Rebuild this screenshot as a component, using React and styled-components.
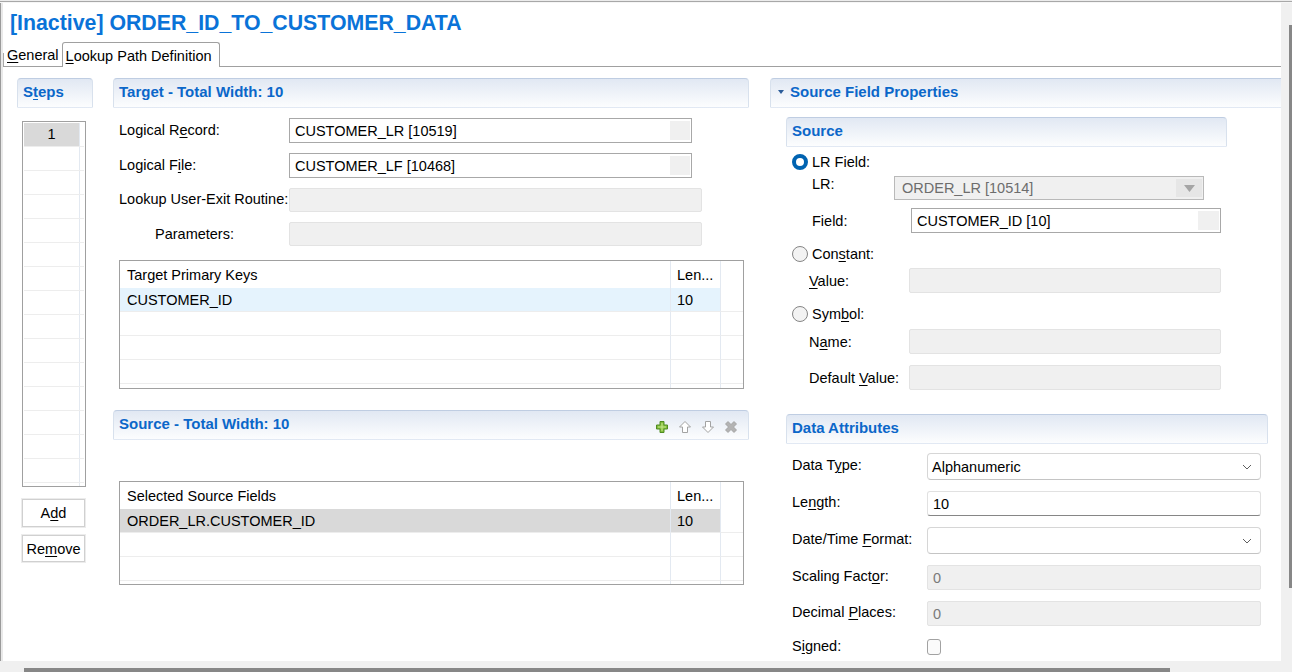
import React from "react";
import styled, { createGlobalStyle, css } from "styled-components";

const GlobalStyle = createGlobalStyle`
  html, body {
    margin: 0;
    padding: 0;
    background: #f0f0f0;
  }
  body {
    font-family: "Liberation Sans", Arial, sans-serif;
    font-size: 14.5px;
    color: #000;
  }
  u {
    text-decoration-thickness: 1px;
    text-underline-offset: 2px;
  }
`;

const Window = styled.div`
  width: 1292px;
  height: 672px;
  overflow: hidden;
  display: grid;
  grid-template-columns: 3px 1278px 11px;
  grid-template-rows: 3px 658px 11px;
  background: #f0f0f0;
`;

const TopStrip = styled.div`
  grid-column: 1 / 4;
  background: linear-gradient(#ececec 0 1px, #a8a8a8 1px 2px, #f6f6f6 2px);
`;

const LeftEdge = styled.div`
  border-left: 1px solid #9a9a9a;
  background: #e9e9e9;
`;

const RightGutter = styled.div`
  display: flex;
  justify-content: flex-end;
  padding-top: 22px;
`;

const VThumb = styled.div`
  width: 3px;
  height: 563px;
  background: #878787;
`;

const BottomBar = styled.div`
  grid-column: 1 / 4;
  padding: 7px 0 0 24px;
`;

const HThumb = styled.div`
  width: 1146px;
  height: 4px;
  background: #878787;
`;

const Content = styled.div`
  background: #fff;
  overflow: hidden;
  display: flex;
  flex-direction: column;
`;

const Title = styled.h1`
  margin: 8px 0 0 7px;
  font-size: 21.3px;
  line-height: 24px;
  font-weight: 700;
  color: #0a73d8;
  white-space: nowrap;
`;

const TabBar = styled.div`
  margin-top: 7px;
  height: 24px;
  display: flex;
  align-items: flex-end;
  border-bottom: 1px solid #a0a0a0;
`;

const Tab = styled.div`
  box-sizing: border-box;
  height: ${(p) => (p.$active ? "25px" : "24px")};
  line-height: 22px;
  padding: 2px ${(p) => (p.$active ? "7px 0 3px" : "3px 0 4px")};
  white-space: nowrap;
  ${(p) =>
    p.$active
      ? css`
          margin-bottom: -1px;
          border: 1px solid #a0a0a0;
          border-bottom: none;
          border-radius: 3px 3px 0 0;
          background: #fff;
        `
      : css`
          background-image: linear-gradient(#a9a9a9, #a9a9a9);
          background-size: 1px 13px;
          background-position: left bottom;
          background-repeat: no-repeat;
        `}
`;

const Body = styled.div`
  display: grid;
  grid-template-columns: 76px 637px 511px;
  column-gap: 20px;
  padding: 11px 0 0 14px;
  align-items: start;
`;

const Column = styled.div`
  display: flex;
  flex-direction: column;
  align-items: flex-start;
`;

const SectionHeader = styled.div`
  box-sizing: border-box;
  width: ${(p) => p.$w}px;
  height: 30px;
  margin-top: ${(p) => p.$mt || 0}px;
  display: flex;
  align-items: flex-start;
  gap: 6px;
  padding: 4px ${(p) => p.$pr || 0}px 0 ${(p) => p.$pl || 5}px;
  border: 1px solid;
  border-color: #bfcde2 #d8e1ed transparent #d8e1ed;
  border-radius: 4px 4px 0 0;
  background: linear-gradient(#e1e8f3, #fcfdfe);
  color: #0b67c9;
  font-size: 15px;
  line-height: 18px;
  font-weight: 700;
  white-space: nowrap;
`;

const HeaderTools = styled.div`
  margin-left: auto;
  align-self: center;
  display: flex;
  gap: 9px;
`;

const Caret = styled.span`
  margin-top: 7px;
  width: 0;
  height: 0;
  border-left: 3.5px solid transparent;
  border-right: 3.5px solid transparent;
  border-top: 4px solid #2b5c99;
`;

/* ---- steps list ---- */

const StepsList = styled.div`
  box-sizing: border-box;
  margin: 13px 0 0 5px;
  width: 64px;
  height: 366px;
  padding: 1px;
  border: 1px solid #a0a0a0;
  overflow: hidden;
`;

const StepRow = styled.div`
  box-sizing: border-box;
  height: 24px;
  display: flex;
  border-bottom: 1px solid #ededed;
`;

const StepCell = styled.div`
  width: 55px;
  text-align: center;
  line-height: 23px;
  border-right: 1px solid #e3e9f1;
  background: ${(p) => (p.$selected ? "#d9d9d9" : "transparent")};
`;

const ButtonStack = styled.div`
  margin: 12px 0 0 5px;
  display: flex;
  flex-direction: column;
  gap: 8px;
`;

const Button = styled.button`
  box-sizing: border-box;
  width: 63px;
  height: ${(p) => p.$h || 28}px;
  padding: 0;
  font: inherit;
  color: #000;
  background: #fff;
  border: 1px solid #d0d0d0;
  outline: 1px solid #ececec;
`;

/* ---- forms ---- */

const Form = styled.div`
  display: grid;
  grid-template-columns: ${(p) => p.$label}px auto;
  grid-template-rows: ${(p) => p.$rows || "auto"};
  row-gap: ${(p) => p.$gap || 11}px;
  align-items: center;
  margin: ${(p) => p.$m || "10px 0 0 6px"};
`;

const Label = styled.span`
  padding-left: ${(p) => p.$indent || 0}px;
  margin-top: ${(p) => p.$lift || 0}px;
  white-space: nowrap;
`;

const Field = styled.div`
  box-sizing: border-box;
  width: ${(p) => p.$w}px;
  height: ${(p) => p.$h || 25}px;
  display: flex;
  align-items: center;
  padding-left: ${(p) => p.$pl || 5}px;
  white-space: nowrap;
  ${(p) => {
    switch (p.$kind) {
      case "disabled":
        return css`
          background: #f0f0f0;
          border: 1px solid #e3e3e3;
          border-radius: 2px;
          color: #7a7a7a;
        `;
      case "combo-off":
        return css`
          background: #f0f0f0;
          border: 1px solid #b9b9b9;
          color: #6d6d6d;
        `;
      case "select":
        return css`
          background: #fff;
          border: 1px solid #d6d6d6;
          border-bottom-color: #c4c4c4;
          border-radius: 4px;
        `;
      case "edit":
        return css`
          background: #fff;
          border: 1px solid #e1e1e1;
          border-bottom: 1px solid #868686;
          border-radius: 3px;
        `;
      default:
        return css`
          background: #fff;
          border: 1px solid #a8a8a8;
        `;
    }
  }}
`;

const Knob = styled.span`
  align-self: stretch;
  width: ${(p) => p.$w || 20}px;
  margin: 2px 1px 2px auto;
  background: ${(p) => p.$bg || "#f0f0f0"};
  display: flex;
  align-items: center;
  justify-content: center;
`;

const Chevron = styled.svg`
  margin: 0 8px 0 auto;
`;

const Check = styled.span`
  box-sizing: border-box;
  width: 14px;
  height: 16px;
  margin-top: 2px;
  border: 1px solid #a2a2a2;
  border-radius: 3px;
  background: #fbfbfb;
`;

/* ---- tables ---- */

const Table = styled.div`
  box-sizing: border-box;
  margin: ${(p) => p.$mt}px 0 0 6px;
  width: 625px;
  height: ${(p) => p.$h}px;
  border: 1px solid #a0a0a0;
  overflow: hidden;
  display: grid;
  grid-template-columns: 551px 50px 1fr;
  grid-template-rows: 27px;
  grid-auto-rows: 24px;
`;

const Cell = styled.div`
  box-sizing: border-box;
  padding-left: ${(p) => (p.$col === 2 ? 6 : 7)}px;
  display: flex;
  align-items: center;
  white-space: nowrap;
  overflow: hidden;
  border-right: ${(p) => (p.$col === 3 ? "none" : "1px solid #e3e9f1")};
  border-bottom: ${(p) => (p.$head ? "none" : "1px solid #ededed")};
  background: ${(p) => (p.$col !== 3 && p.$bg ? p.$bg : "transparent")};
`;

/* ---- right side ---- */

const Group = styled.div`
  margin: ${(p) => p.$mt}px 0 0 16px;
  display: flex;
  flex-direction: column;
  align-items: flex-start;
`;

const GroupBody = styled.div`
  padding-left: 6px;
  display: flex;
  flex-direction: column;
  align-items: flex-start;
`;

const RadioRow = styled.div`
  margin-top: ${(p) => p.$mt}px;
  display: flex;
  align-items: center;
  gap: 4px;
  height: 16px;
`;

const Radio = styled.span`
  box-sizing: border-box;
  width: 16px;
  height: 16px;
  border-radius: 50%;
  ${(p) =>
    p.$checked
      ? css`
          border: 4.5px solid #0063b1;
          background: #fff;
        `
      : css`
          border: 1px solid #858585;
          background: #f3f3f3;
        `}
`;

const SubRow = styled.div`
  margin: ${(p) => p.$mt}px 0 0 ${(p) => p.$ml}px;
  display: flex;
  align-items: ${(p) => p.$align || "center"};
`;

const SubLabel = styled.span`
  width: ${(p) => p.$w}px;
  white-space: nowrap;
  padding-top: ${(p) => p.$pt || 0}px;
`;

function PlusIcon() {
  return (
    <svg width="14" height="14" viewBox="0 0 14 14">
      <path d="M5 1.5h4v3.5h3.5v4H9v3.5H5V9H1.5V5H5z" fill="#83bd3c" stroke="#4f8c22" strokeWidth="1" />
      <path d="M6.5 3h1v3.5H11v1H7.5V11h-1V7.5H3v-1h3.5z" fill="#c9e98e" />
    </svg>
  );
}

function ArrowIcon({ down }) {
  return (
    <svg width="14" height="14" viewBox="0 0 14 14">
      <path
        d="M7 1.5L12.5 7H9.5v5.5h-5V7H1.5z"
        fill="#fff"
        stroke="#a3a3a3"
        strokeWidth="1"
        transform={down ? "rotate(180 7 7)" : undefined}
      />
    </svg>
  );
}

function DeleteIcon() {
  return (
    <svg width="14" height="14" viewBox="0 0 14 14">
      <path
        d="M1.5 4L4 1.5 7 4.5 10 1.5 12.5 4 9.5 7 12.5 10 10 12.5 7 9.5 4 12.5 1.5 10 4.5 7z"
        fill="#b3b3b3"
        stroke="#9a9a9a"
        strokeWidth="0.8"
      />
    </svg>
  );
}

function DownChevron() {
  return (
    <Chevron width="10" height="6" viewBox="0 0 10 6">
      <path d="M1 1l4 4 4-4" fill="none" stroke="#5f5f5f" strokeWidth="1" />
    </Chevron>
  );
}

function GridTable({ mt, h, title, rows, selectedBg, count }) {
  const cells = [];
  cells.push(
    <Cell key="h1" $head $col={1}>{title}</Cell>,
    <Cell key="h2" $head $col={2}>Len...</Cell>,
    <Cell key="h3" $head $col={3} />
  );
  for (let i = 0; i < count; i++) {
    const r = rows[i];
    const bg = r ? selectedBg : null;
    cells.push(
      <Cell key={`a${i}`} $col={1} $bg={bg}>{r ? r[0] : ""}</Cell>,
      <Cell key={`b${i}`} $col={2} $bg={bg}>{r ? r[1] : ""}</Cell>,
      <Cell key={`c${i}`} $col={3} />
    );
  }
  return (
    <Table $mt={mt} $h={h}>
      {cells}
    </Table>
  );
}

function Steps() {
  return (
    <Column>
      <SectionHeader $w={76}>
        <span>
          S<u>t</u>eps
        </span>
      </SectionHeader>
      <StepsList>
        {Array.from({ length: 16 }).map((_, i) => (
          <StepRow key={i}>
            <StepCell $selected={i === 0}>{i === 0 ? "1" : ""}</StepCell>
          </StepRow>
        ))}
      </StepsList>
      <ButtonStack>
        <Button>
          A<u>d</u>d
        </Button>
        <Button $h={27}>
          Re<u>m</u>ove
        </Button>
      </ButtonStack>
    </Column>
  );
}

function TargetPanel() {
  return (
    <Column>
      <SectionHeader $w={636} $pl={5}>
        Target - Total Width: 10
      </SectionHeader>
      <Form $label={170} $rows="25px 25px 24px 24px" $gap={10}>
        <Label $lift={-2}>
          Logical R<u>e</u>cord:
        </Label>
        <Field $w={403}>
          CUSTOMER_LR [10519]
          <Knob />
        </Field>
        <Label $lift={-2}>
          Logical F<u>i</u>le:
        </Label>
        <Field $w={403}>
          CUSTOMER_LF [10468]
          <Knob />
        </Field>
        <Label $lift={-2}>Lookup User-Exit Routine:</Label>
        <Field $w={413} $h={24} $kind="disabled" />
        <Label $indent={36}>Parameters:</Label>
        <Field $w={413} $h={24} $kind="disabled" />
      </Form>
      <GridTable
        mt={14}
        h={129}
        title="Target Primary Keys"
        rows={[["CUSTOMER_ID", "10"]]}
        selectedBg="#e5f3fd"
        count={5}
      />
      <SectionHeader $w={636} $pr={10} $mt={21}>
        Source - Total Width: 10
        <HeaderTools>
          <PlusIcon />
          <ArrowIcon />
          <ArrowIcon down />
          <DeleteIcon />
        </HeaderTools>
      </SectionHeader>
      <GridTable
        mt={41}
        h={104}
        title="Selected Source Fields"
        rows={[["ORDER_LR.CUSTOMER_ID", "10"]]}
        selectedBg="#d9d9d9"
        count={4}
      />
    </Column>
  );
}

function PropertiesPanel() {
  return (
    <Column>
      <SectionHeader $w={520} $pl={7}>
        <Caret />
        Source Field Properties
      </SectionHeader>
      <Group $mt={9}>
        <SectionHeader $w={441} $pl={5}>
          Source
        </SectionHeader>
        <GroupBody>
          <RadioRow $mt={7}>
            <Radio $checked />
            LR Field:
          </RadioRow>
          <SubRow $mt={6} $ml={20} $align="flex-start">
            <SubLabel $w={82}>LR:</SubLabel>
            <Field $w={310} $h={24} $kind="combo-off" $pl={7}>
              ORDER_LR [10514]
              <Knob $w={26} $bg="#e6e6e6">
                <svg width="11" height="7" viewBox="0 0 11 7">
                  <path d="M0 0h11L5.5 7z" fill="#a5a5a5" />
                </svg>
              </Knob>
            </Field>
          </SubRow>
          <SubRow $mt={8} $ml={20}>
            <SubLabel $w={99}>Field:</SubLabel>
            <Field $w={310}>
              CUSTOMER_ID [10]
              <Knob $w={21} />
            </Field>
          </SubRow>
          <RadioRow $mt={13}>
            <Radio />
            <span>
              Con<u>s</u>tant:
            </span>
          </RadioRow>
          <SubRow $mt={6} $ml={17}>
            <SubLabel $w={100}>
              <u>V</u>alue:
            </SubLabel>
            <Field $w={312} $kind="disabled" />
          </SubRow>
          <RadioRow $mt={13}>
            <Radio />
            <span>
              Sym<u>b</u>ol:
            </span>
          </RadioRow>
          <SubRow $mt={7} $ml={17}>
            <SubLabel $w={100}>
              N<u>a</u>me:
            </SubLabel>
            <Field $w={312} $kind="disabled" />
          </SubRow>
          <SubRow $mt={11} $ml={17}>
            <SubLabel $w={100}>
              Default <u>V</u>alue:
            </SubLabel>
            <Field $w={312} $kind="disabled" />
          </SubRow>
        </GroupBody>
      </Group>
      <Group $mt={24}>
        <SectionHeader $w={482} $pl={5}>
          Data Attributes
        </SectionHeader>
        <Form $label={135} $rows="27px 25px 27px 25px 25px 18px" $m="9px 0 0 6px">
          <Label $lift={-3}>
            Data T<u>y</u>pe:
          </Label>
          <Field $w={334} $h={27} $kind="select" $pl={4}>
            Alphanumeric
            <DownChevron />
          </Field>
          <Label $lift={-3}>
            Le<u>n</u>gth:
          </Label>
          <Field $w={334} $kind="edit" $pl={5}>
            10
          </Field>
          <Label $lift={-3}>
            Date/Time <u>F</u>ormat:
          </Label>
          <Field $w={334} $h={27} $kind="select">
            <DownChevron />
          </Field>
          <Label $lift={-3}>
            Scaling Fact<u>o</u>r:
          </Label>
          <Field $w={334} $kind="disabled" $pl={5}>
            0
          </Field>
          <Label $lift={-3}>
            Decimal <u>P</u>laces:
          </Label>
          <Field $w={334} $kind="disabled" $pl={5}>
            0
          </Field>
          <Label>
            S<u>i</u>gned:
          </Label>
          <Check />
        </Form>
      </Group>
    </Column>
  );
}

export default function App() {
  return (
    <>
      <GlobalStyle />
      <Window>
        <TopStrip />
        <LeftEdge />
        <Content>
          <Title>[Inactive] ORDER_ID_TO_CUSTOMER_DATA</Title>
          <TabBar>
            <Tab>
              <u>G</u>eneral
            </Tab>
            <Tab $active>
              <u>L</u>ookup Path Definition
            </Tab>
          </TabBar>
          <Body>
            <Steps />
            <TargetPanel />
            <PropertiesPanel />
          </Body>
        </Content>
        <RightGutter>
          <VThumb />
        </RightGutter>
        <BottomBar>
          <HThumb />
        </BottomBar>
      </Window>
    </>
  );
}
